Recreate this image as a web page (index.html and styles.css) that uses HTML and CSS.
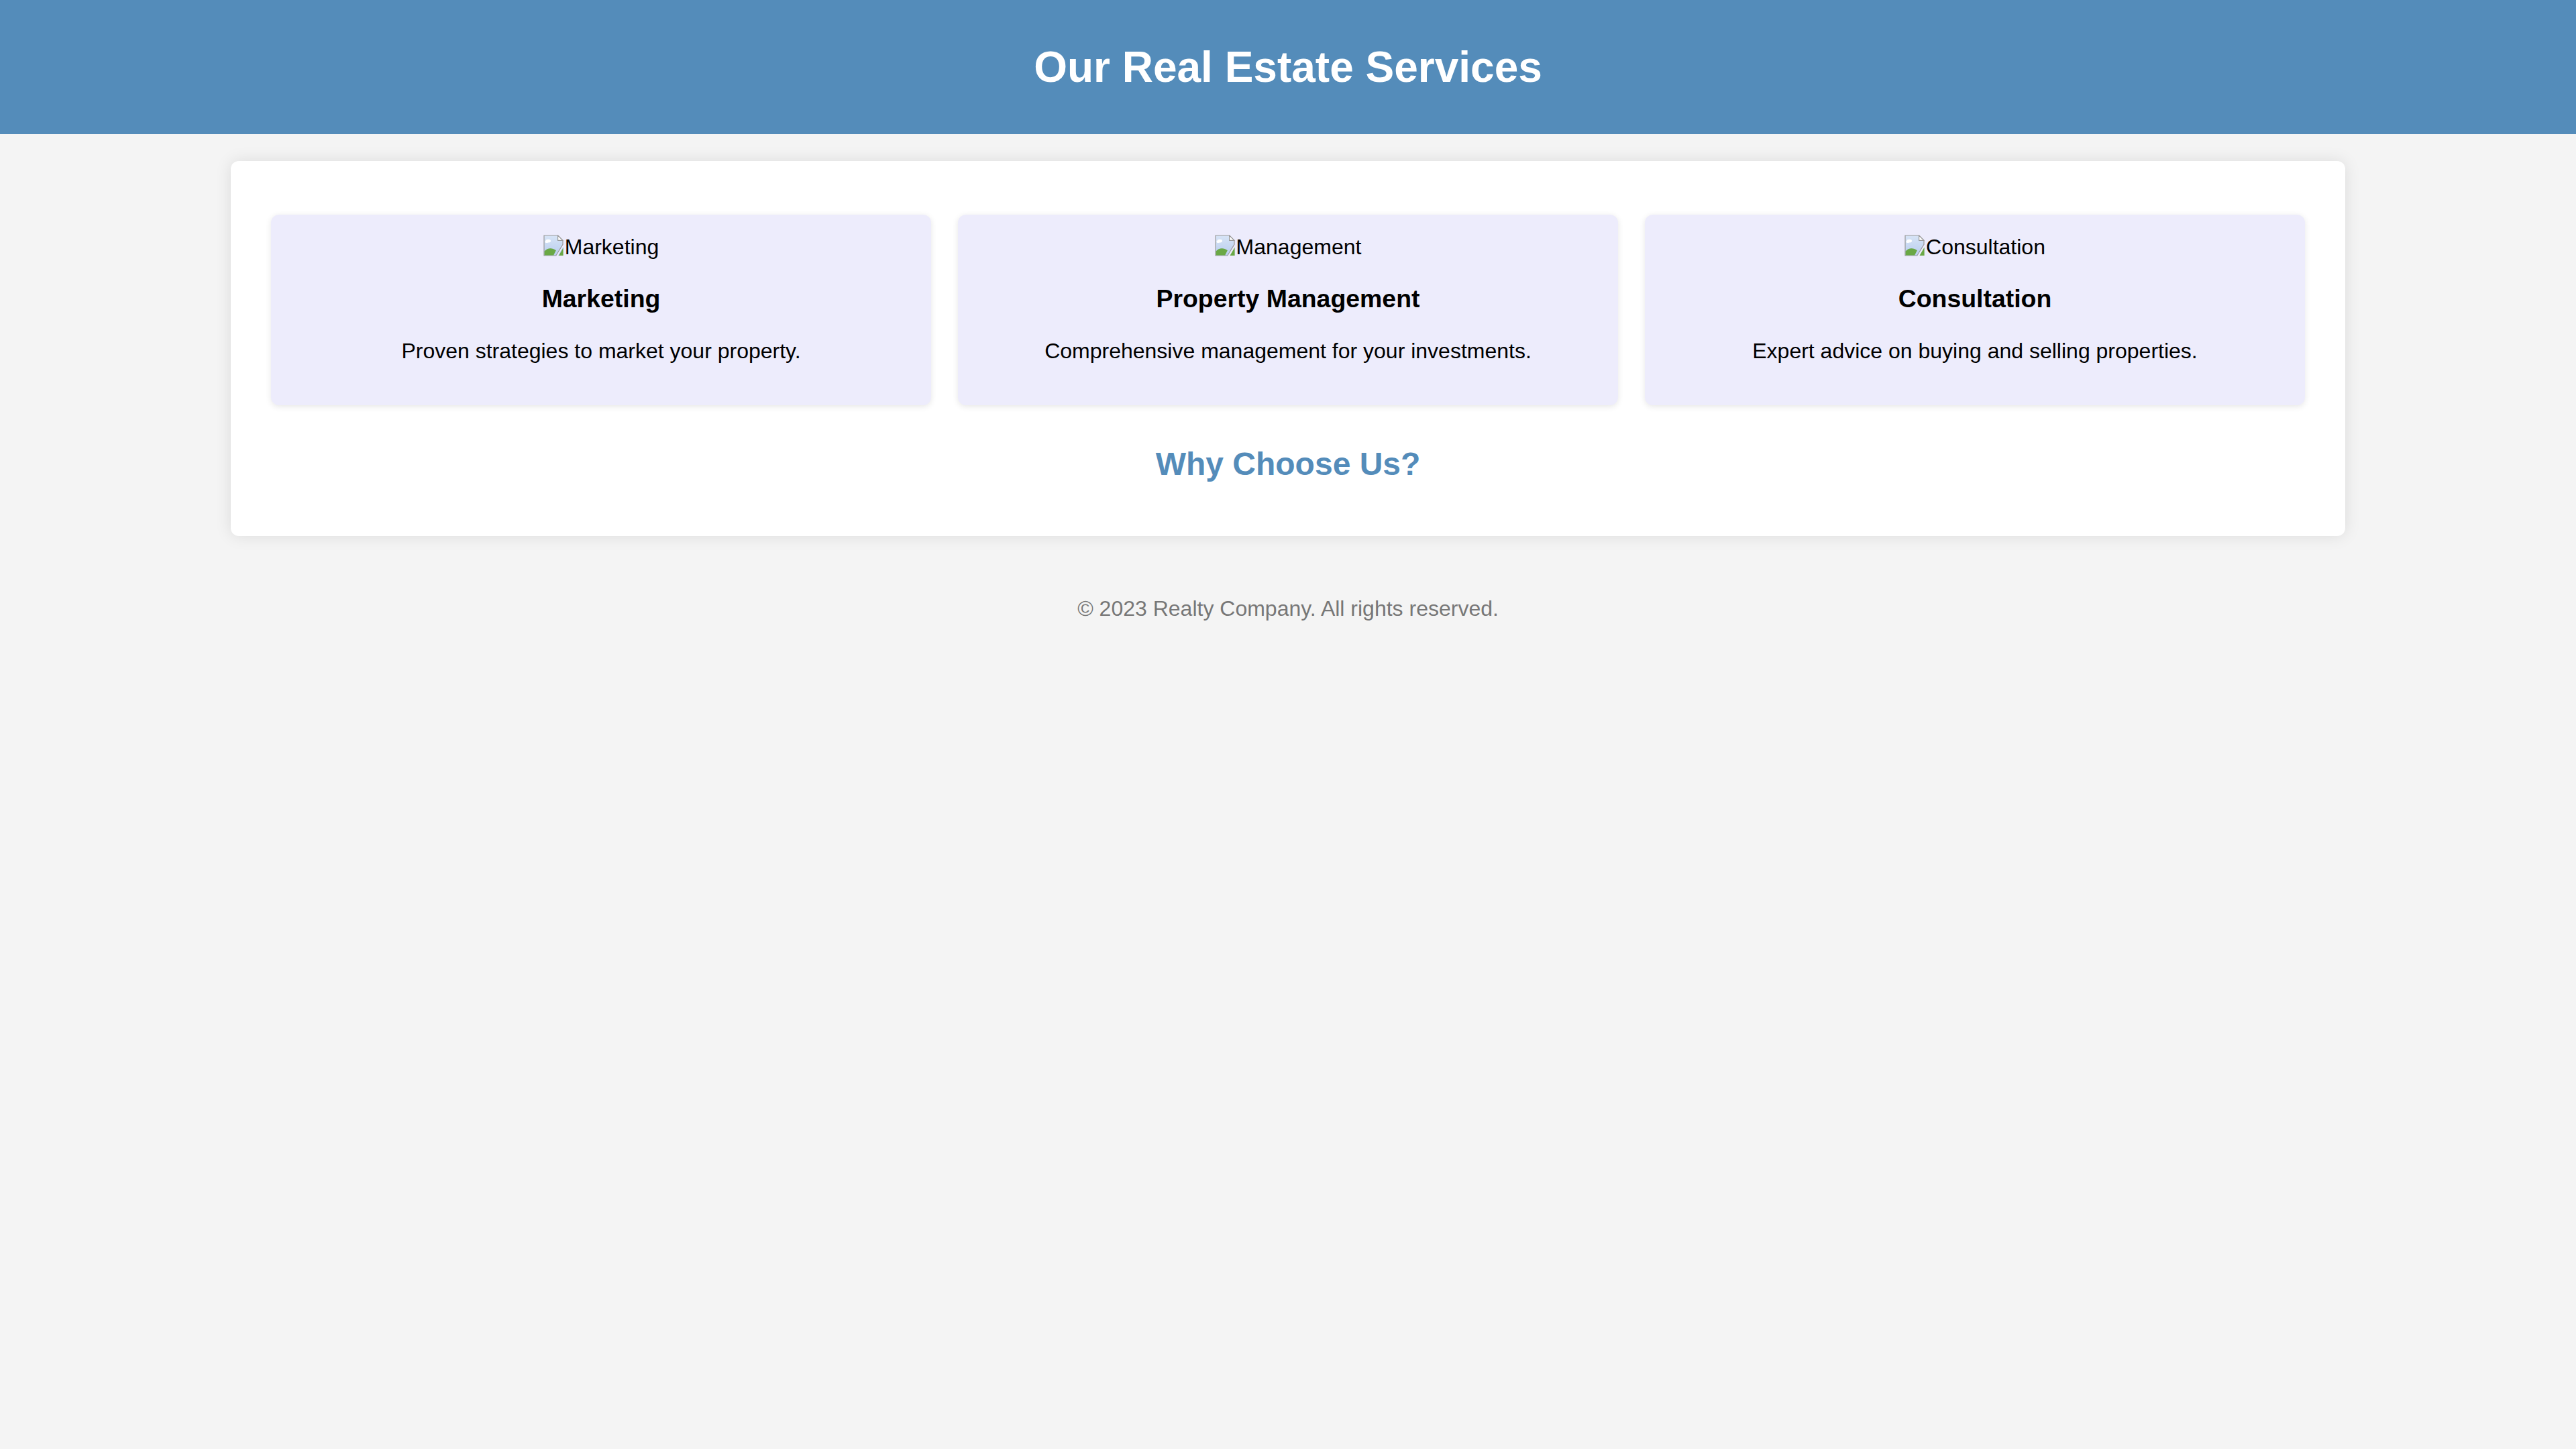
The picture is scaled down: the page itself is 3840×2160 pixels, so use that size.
FILE: index.html
```html
<!DOCTYPE html>
<html lang="en">
<head>
<meta charset="utf-8">
<title>Our Real Estate Services</title>
<link rel="stylesheet" href="styles.css">
</head>
<body>
<header class="header">
  <h1 class="header-title">Our Real Estate Services</h1>
</header>
<main class="container">
  <section class="services">
    <div class="card">
      <div class="card-img"><svg class="broken-icon" viewBox="0 0 16 16" width="32" height="32" aria-hidden="true"><defs><linearGradient id="sky1" x1="0" y1="0" x2="0" y2="1"><stop offset="0" stop-color="#d7e4f6"/><stop offset="1" stop-color="#b9cdee"/></linearGradient></defs><path d="M0.5 0.5H10.8L14.5 4.2V7.2L9.4 15.5H0.5Z" fill="url(#sky1)" stroke="#9a9a9a" stroke-width="0.6"/><path d="M10.8 0.5V4.2H14.5Z" fill="#fff" stroke="#9a9a9a" stroke-width="0.6" stroke-linejoin="round"/><ellipse cx="3.6" cy="4.6" rx="1.9" ry="1.2" fill="#fff"/><ellipse cx="2.4" cy="5.2" rx="1.2" ry="0.8" fill="#fff"/><path d="M0.8 15.2V12.2C3 9.6 6.6 9.4 9.4 11.6L7.6 15.2Z" fill="#6aa845"/><path d="M14.8 9.4V15.5H11.2Z" fill="#6aa845"/><path d="M14.8 9.4L11.2 15.5" stroke="#b9cdee" stroke-width="0.5"/></svg>Marketing</div>
      <h3 class="card-title">Marketing</h3>
      <p class="card-text">Proven strategies to market your property.</p>
    </div>
    <div class="card">
      <div class="card-img"><svg class="broken-icon" viewBox="0 0 16 16" width="32" height="32" aria-hidden="true"><defs><linearGradient id="sky2" x1="0" y1="0" x2="0" y2="1"><stop offset="0" stop-color="#d7e4f6"/><stop offset="1" stop-color="#b9cdee"/></linearGradient></defs><path d="M0.5 0.5H10.8L14.5 4.2V7.2L9.4 15.5H0.5Z" fill="url(#sky2)" stroke="#9a9a9a" stroke-width="0.6"/><path d="M10.8 0.5V4.2H14.5Z" fill="#fff" stroke="#9a9a9a" stroke-width="0.6" stroke-linejoin="round"/><ellipse cx="3.6" cy="4.6" rx="1.9" ry="1.2" fill="#fff"/><ellipse cx="2.4" cy="5.2" rx="1.2" ry="0.8" fill="#fff"/><path d="M0.8 15.2V12.2C3 9.6 6.6 9.4 9.4 11.6L7.6 15.2Z" fill="#6aa845"/><path d="M14.8 9.4V15.5H11.2Z" fill="#6aa845"/></svg>Management</div>
      <h3 class="card-title">Property Management</h3>
      <p class="card-text">Comprehensive management for your investments.</p>
    </div>
    <div class="card">
      <div class="card-img"><svg class="broken-icon" viewBox="0 0 16 16" width="32" height="32" aria-hidden="true"><defs><linearGradient id="sky3" x1="0" y1="0" x2="0" y2="1"><stop offset="0" stop-color="#d7e4f6"/><stop offset="1" stop-color="#b9cdee"/></linearGradient></defs><path d="M0.5 0.5H10.8L14.5 4.2V7.2L9.4 15.5H0.5Z" fill="url(#sky3)" stroke="#9a9a9a" stroke-width="0.6"/><path d="M10.8 0.5V4.2H14.5Z" fill="#fff" stroke="#9a9a9a" stroke-width="0.6" stroke-linejoin="round"/><ellipse cx="3.6" cy="4.6" rx="1.9" ry="1.2" fill="#fff"/><ellipse cx="2.4" cy="5.2" rx="1.2" ry="0.8" fill="#fff"/><path d="M0.8 15.2V12.2C3 9.6 6.6 9.4 9.4 11.6L7.6 15.2Z" fill="#6aa845"/><path d="M14.8 9.4V15.5H11.2Z" fill="#6aa845"/></svg>Consultation</div>
      <h3 class="card-title">Consultation</h3>
      <p class="card-text">Expert advice on buying and selling properties.</p>
    </div>
  </section>
  <h2 class="why-title">Why Choose Us?</h2>
</main>
<footer class="footer">
  <p class="footer-text">&copy; 2023 Realty Company. All rights reserved.</p>
</footer>
</body>
</html>
```

FILE: styles.css
```css
body {
  margin: 0;
  background: #f4f4f4;
  font-family: "Liberation Sans", Arial, sans-serif;
  font-size: 32px;
  color: #000;
}

.header {
  background: #548cba;
  color: #fff;
  height: 200px;
  display: flex;
  align-items: center;
  justify-content: center;
}

.header-title {
  margin: 0;
  font-size: 64px;
  font-weight: bold;
}

.container {
  box-sizing: border-box;
  max-width: 3152px;
  margin: 40px auto;
  padding: 40px;
  background: #fff;
  border-radius: 12px;
  box-shadow: 0 0 24px rgba(0, 0, 0, 0.1);
}

.services {
  display: flex;
  margin: 20px 0;
}

.card {
  flex: 1;
  margin: 20px;
  padding: 30px;
  background: #edecfc;
  border-radius: 12px;
  box-shadow: 0 2px 10px rgba(0, 0, 0, 0.1);
  text-align: center;
}

.card-img {
  line-height: normal;
}

.broken-icon {
  vertical-align: top;
}

.card-title {
  font-size: 37.44px;
  margin: 37.44px 0;
}

.card-text {
  margin: 32px 0;
}

.why-title {
  font-size: 48px;
  color: #548cba;
  text-align: center;
  margin: 40px 0;
}

.footer {
  text-align: center;
  color: #777;
  padding: 10px 0 40px;
}

.footer-text {
  margin: 40px 0 0;
}
```
